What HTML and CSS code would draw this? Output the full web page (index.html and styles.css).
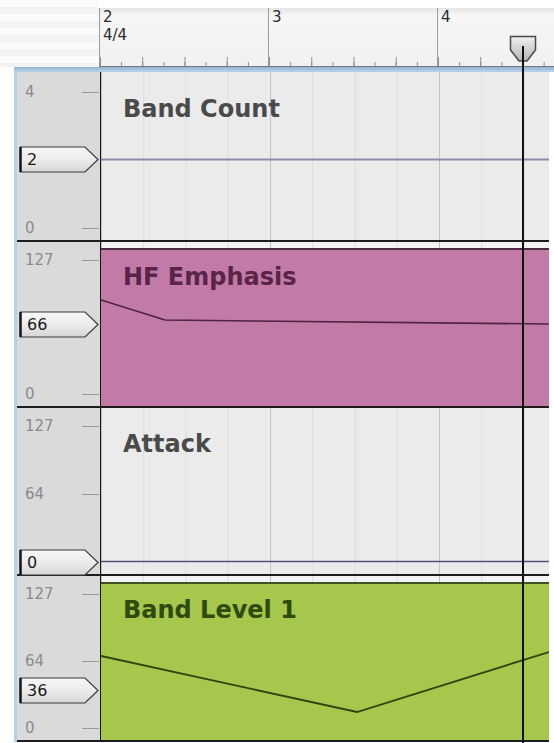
FILE: index.html
```html
<!DOCTYPE html>
<html>
<head>
<meta charset="utf-8">
<link rel="stylesheet" href="styles.css">
</head>
<body>
<div class="app">
  <div class="header">
    <div class="header-left"></div>
    <div class="ruler">
      <div class="bar"><span class="bar-num">2</span><span class="sig">4/4</span></div>
      <div class="bar"><span class="bar-num">3</span></div>
      <div class="bar"><span class="bar-num">4</span></div>
    </div>
  </div>
  <div class="band"></div>
  <div class="frame">
    <div class="lane lane-1">
      <div class="scale scale-1">
        <div class="tick-row"><span class="tick-label">4</span><span class="tick"></span></div>
        <div class="tick-row"><span class="tick-label">0</span><span class="tick"></span></div>
        <div class="valbox" style="top:74px">
          <svg width="80" height="27" viewBox="0 0 80 27"><defs><linearGradient id="vb1" x1="0" y1="0" x2="0" y2="1"><stop offset="0" stop-color="#f6f6f6"/><stop offset="0.5" stop-color="#ececec"/><stop offset="1" stop-color="#d6d6d6"/></linearGradient></defs><path d="M1.5,1 H66 L79,13.5 L66,26 H1.5 Z" fill="url(#vb1)" stroke="#3a3a3a" stroke-width="1.2"/><line x1="1.5" y1="1" x2="1.5" y2="26" stroke="#111" stroke-width="2.4"/></svg>
          <span>2</span>
        </div>
      </div>
      <div class="plot plot-gray">
        <svg class="curve" width="448" height="168" viewBox="0 0 448 168"><line x1="0" y1="87.5" x2="448" y2="87.5" stroke="#8e8aab" stroke-width="2"/></svg>
        <div class="label label-1">Band Count</div>
      </div>
    </div>
    <div class="lane lane-2">
      <div class="scale">
        <div class="tick-row"><span class="tick-label">127</span><span class="tick"></span></div>
        <div class="tick-row"><span class="tick-label">0</span><span class="tick"></span></div>
        <div class="valbox" style="top:69px">
          <svg width="80" height="27" viewBox="0 0 80 27"><defs><linearGradient id="vb2" x1="0" y1="0" x2="0" y2="1"><stop offset="0" stop-color="#f6f6f6"/><stop offset="0.5" stop-color="#ececec"/><stop offset="1" stop-color="#d6d6d6"/></linearGradient></defs><path d="M1.5,1 H66 L79,13.5 L66,26 H1.5 Z" fill="url(#vb2)" stroke="#3a3a3a" stroke-width="1.2"/><line x1="1.5" y1="1" x2="1.5" y2="26" stroke="#111" stroke-width="2.4"/></svg>
          <span>66</span>
        </div>
      </div>
      <div class="plot plot-light">
        <div class="region region-pink">
          <svg class="curve" width="448" height="156" viewBox="0 0 448 156"><polyline points="0,50 64,70 448,74" fill="none" stroke="#4f2341" stroke-width="1.6"/></svg>
          <div class="label label-pink">HF Emphasis</div>
        </div>
      </div>
    </div>
    <div class="lane lane-3">
      <div class="scale">
        <div class="tick-row"><span class="tick-label">127</span><span class="tick"></span></div>
        <div class="tick-row"><span class="tick-label">64</span><span class="tick"></span></div>
        <div class="tick-row"><span class="tick-label"></span><span class="tick"></span></div>
        <div class="valbox" style="top:141px">
          <svg width="80" height="27" viewBox="0 0 80 27"><defs><linearGradient id="vb3" x1="0" y1="0" x2="0" y2="1"><stop offset="0" stop-color="#f6f6f6"/><stop offset="0.5" stop-color="#ececec"/><stop offset="1" stop-color="#d6d6d6"/></linearGradient></defs><path d="M1.5,1 H66 L79,13.5 L66,26 H1.5 Z" fill="url(#vb3)" stroke="#3a3a3a" stroke-width="1.2"/><line x1="1.5" y1="1" x2="1.5" y2="26" stroke="#111" stroke-width="2.4"/></svg>
          <span>0</span>
        </div>
      </div>
      <div class="plot plot-gray">
        <svg class="curve" width="448" height="166" viewBox="0 0 448 166"><line x1="0" y1="153.5" x2="448" y2="153.5" stroke="#55527a" stroke-width="1.6"/></svg>
        <div class="label label-3">Attack</div>
      </div>
    </div>
    <div class="lane lane-4">
      <div class="scale">
        <div class="tick-row"><span class="tick-label">127</span><span class="tick"></span></div>
        <div class="tick-row"><span class="tick-label">64</span><span class="tick"></span></div>
        <div class="tick-row"><span class="tick-label">0</span><span class="tick"></span></div>
        <div class="valbox" style="top:101px">
          <svg width="80" height="27" viewBox="0 0 80 27"><defs><linearGradient id="vb4" x1="0" y1="0" x2="0" y2="1"><stop offset="0" stop-color="#f6f6f6"/><stop offset="0.5" stop-color="#ececec"/><stop offset="1" stop-color="#d6d6d6"/></linearGradient></defs><path d="M1.5,1 H66 L79,13.5 L66,26 H1.5 Z" fill="url(#vb4)" stroke="#3a3a3a" stroke-width="1.2"/><line x1="1.5" y1="1" x2="1.5" y2="26" stroke="#111" stroke-width="2.4"/></svg>
          <span>36</span>
        </div>
      </div>
      <div class="plot plot-light">
        <div class="region region-green">
          <svg class="curve" width="448" height="156" viewBox="0 0 448 156"><polyline points="0,72 256,128 448,68" fill="none" stroke="#2f4410" stroke-width="1.8"/></svg>
          <div class="label label-green">Band Level 1</div>
        </div>
      </div>
    </div>
  </div>
  <div class="playhead-line"></div>
  <svg class="playhead-handle" width="28" height="28" viewBox="0 0 28 28"><defs><linearGradient id="ph" x1="0" y1="0" x2="0" y2="1"><stop offset="0" stop-color="#f0f0f0"/><stop offset="1" stop-color="#b4b4b4"/></linearGradient></defs><path d="M1.5,1.5 H26.5 V15 L18,26 H10 L1.5,15 Z" fill="url(#ph)" stroke="#4a4a4a" stroke-width="1.5"/><line x1="14" y1="11" x2="14" y2="28" stroke="#111" stroke-width="2"/></svg>
</div>
</body>
</html>
```
FILE: styles.css
```css
* { box-sizing: border-box; }
body {
  margin: 0;
  background: #ffffff;
  font-family: "DejaVu Sans", "Liberation Sans", sans-serif;
}
.app {
  position: relative;
  width: 554px;
  height: 743px;
  overflow: hidden;
  background: #ffffff;
}
.header {
  display: flex;
  height: 67px;
}
.header-left {
  width: 99px;
  flex: none;
  background: repeating-linear-gradient(to bottom, #fbfbfb 0 7px, #f3f3f3 7px 14px);
}
.ruler {
  flex: 1;
  display: flex;
  margin-top: 8px;
  border-bottom: 1px solid #6f7882;
  background: linear-gradient(#e4e4e4, #f6f6f6 12%, #f1f1f1);
}
.bar {
  width: 169px;
  flex: none;
  display: flex;
  flex-direction: column;
  border-left: 1px solid #9c9c9c;
  padding-left: 3px;
  font-size: 15px;
  line-height: 18px;
  color: #2b2b2b;
  background-image:
    linear-gradient(to right, #8c8c8c 1px, transparent 1px),
    linear-gradient(to right, #8c8c8c 1px, transparent 1px);
  background-size: 21.125px 4px, 42.25px 9px;
  background-repeat: repeat-x;
  background-position: 0 100%, 0 100%;
}
.band {
  height: 5px;
  margin-left: 14px;
  background: linear-gradient(#94b4d1, #b9d2e8);
}
.frame {
  width: 535px;
  margin-left: 14px;
  border-left: 3px solid #b5d0e8;
}
.lane {
  display: flex;
  border-bottom: 2px solid #1c1c1c;
}
.lane-1 { height: 170px; }
.lane-2 { height: 166px; }
.lane-3 { height: 168px; }
.lane-4 { height: 166px; }
.scale {
  width: 84px;
  flex: none;
  position: relative;
  display: flex;
  flex-direction: column;
  justify-content: space-between;
  padding: 10px 0 4px;
  background: #dadada;
  border-right: 1px solid #161616;
}
.scale-1 { padding-top: 12px; }
.tick-row {
  display: flex;
  align-items: center;
  height: 16px;
}
.tick-label {
  flex: 1;
  padding-left: 8px;
  font-size: 15px;
  color: #8b8b8b;
}
.tick {
  width: 17px;
  height: 1px;
  margin-right: 1px;
  background: #9a9a9a;
}
.valbox {
  position: absolute;
  left: 2px;
  width: 80px;
  height: 27px;
}
.valbox svg {
  position: absolute;
  left: 0;
  top: 0;
}
.valbox span {
  position: relative;
  display: block;
  padding-left: 8px;
  line-height: 27px;
  font-size: 16px;
  color: #1b1b1b;
}
.plot {
  flex: 1;
  position: relative;
  display: flex;
  flex-direction: column;
  background-image:
    linear-gradient(to right, #c3c3c3 1px, transparent 1px),
    linear-gradient(to right, #dcdcdc 1px, transparent 1px);
  background-size: 169px 100%, 42.25px 100%;
  background-position: 0 0, 0 0;
  background-repeat: repeat-x;
}
.plot-gray { background-color: #ebebeb; }
.plot-light { background-color: #f3f3f3; }
.curve {
  position: absolute;
  left: 0;
  top: 0;
}
.label {
  position: relative;
  padding-left: 22px;
  font-size: 24px;
  line-height: 24px;
  font-weight: bold;
  color: #4a4a4a;
}
.label-1 { padding-top: 25px; }
.label-3 { padding-top: 24px; }
.region {
  flex: 1;
  position: relative;
  margin-top: 6px;
  border-top: 2px solid;
}
.region-pink {
  background: #c17ba6;
  border-color: #4c2c40;
}
.region-green {
  background: #a5c74b;
  border-color: #3f5220;
}
.label-pink {
  padding-top: 15px;
  color: #5a2446;
}
.label-green {
  padding-top: 14px;
  color: #2e4a0c;
}
.playhead-line {
  position: absolute;
  left: 522px;
  top: 47px;
  bottom: 0;
  width: 2px;
  background: #101010;
}
.playhead-handle {
  position: absolute;
  left: 509px;
  top: 35px;
}
```
